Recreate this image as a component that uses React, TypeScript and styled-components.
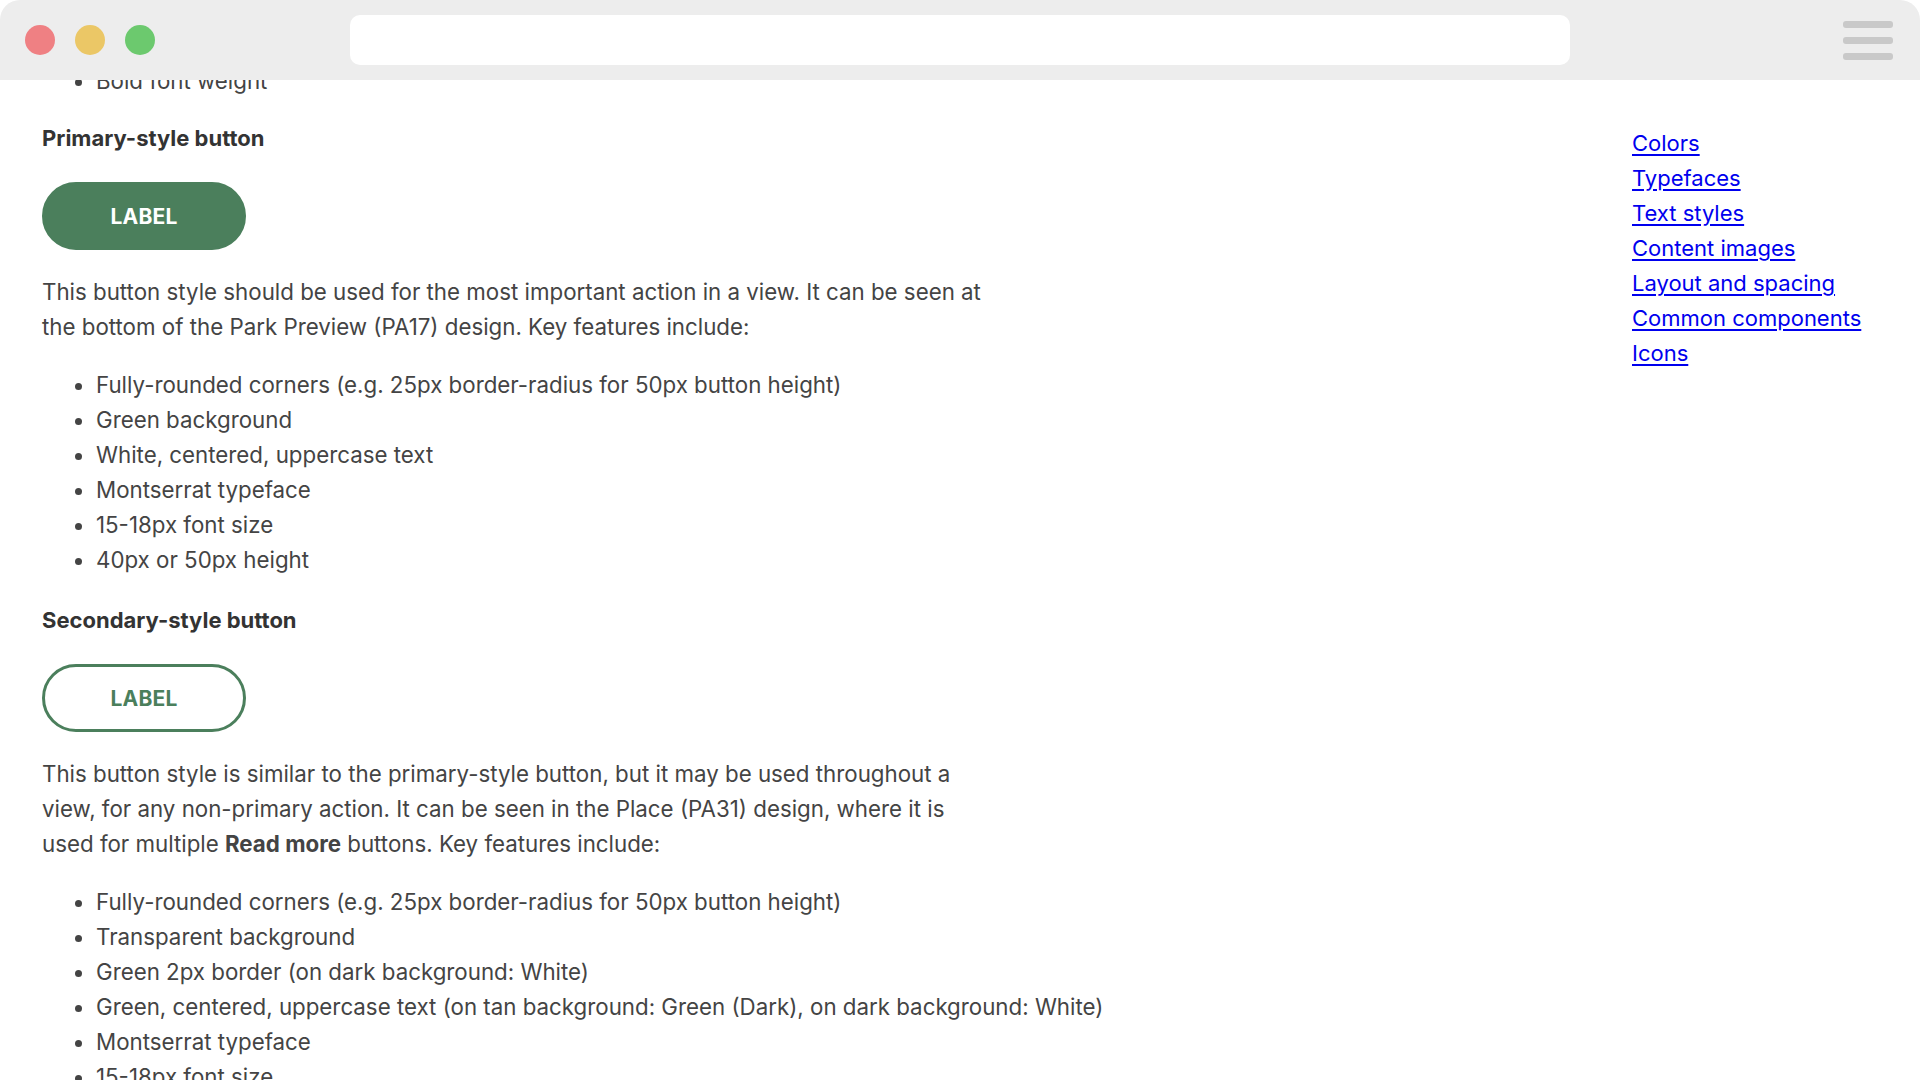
import React from 'react';
import styled, { createGlobalStyle } from 'styled-components';

const GlobalStyle = createGlobalStyle`
  html, body {
    margin: 0;
    padding: 0;
    background: #fff;
    overflow: hidden;
  }
  body {
    font-family: Inter, "Liberation Sans", Arial, sans-serif;
  }
`;

const green = '#4b7f5c';

const Window = styled.div`
  display: flex;
  flex-direction: column;
  height: 100vh;
  background: #fff;
`;

const TitleBar = styled.header`
  display: grid;
  grid-template-columns: 350px 1220px 1fr;
  align-items: center;
  height: 80px;
  flex-shrink: 0;
  background: #ededed;
  border-radius: 20px 20px 0 0;
  position: relative;
  z-index: 1;
`;

const Lights = styled.div`
  display: flex;
  gap: 20px;
  padding-left: 25px;
`;

const Light = styled.span<{ color: string }>`
  width: 30px;
  height: 30px;
  border-radius: 50%;
  background: ${({ color }) => color};
`;

const AddressBar = styled.div`
  height: 50px;
  background: #fff;
  border-radius: 10px;
`;

const Menu = styled.div`
  justify-self: end;
  margin-right: 27px;
  display: flex;
  flex-direction: column;
  gap: 9px;
`;

const MenuBar = styled.span`
  display: block;
  width: 50px;
  height: 7px;
  border-radius: 3px;
  background: #c9c9c9;
`;

const Viewport = styled.div`
  flex: 1;
  overflow: hidden;
  display: grid;
  grid-template-columns: 1fr 288px;
  font-size: 22px;
  line-height: 35px;
`;

const Main = styled.main`
  display: flex;
  flex-direction: column;
  align-items: flex-start;
  padding-left: 42px;
  margin-top: -17px;
  font-size: 22.3px;
  color: #444;
`;

const Heading = styled.h3<{ $first?: boolean }>`
  margin: ${({ $first }) => ($first ? '23px 0 26px' : '26px 0')};
  font-size: 22px;
  line-height: 35px;
  font-weight: 700;
  color: #333;
`;

const Button = styled.button<{ $outline?: boolean }>`
  width: 204px;
  height: 68px;
  margin-bottom: 24px;
  border-radius: 34px;
  border: 3px solid ${green};
  background: ${({ $outline }) => ($outline ? 'transparent' : green)};
  color: ${({ $outline }) => ($outline ? green : '#fff')};
  font-family: inherit;
  font-size: 21px;
  font-weight: 700;
  letter-spacing: 0.2px;
  text-transform: uppercase;
  cursor: pointer;
`;

const Para = styled.p`
  margin: 0 0 23px;
  white-space: nowrap;
`;

const List = styled.ul`
  margin: 0;
  padding-left: 54px;
  list-style: disc;
`;

const Item = styled.li`
  white-space: nowrap;
`;

const Aside = styled.nav`
  display: flex;
  flex-direction: column;
  align-items: flex-start;
  padding-top: 46px;
`;

const Link = styled.a`
  color: #0000ee;
  text-decoration: underline;
  text-underline-offset: 3px;
  white-space: nowrap;
`;

const primaryFeatures = [
  'Fully-rounded corners (e.g. 25px border-radius for 50px button height)',
  'Green background',
  'White, centered, uppercase text',
  'Montserrat typeface',
  '15-18px font size',
  '40px or 50px height',
];

const secondaryFeatures = [
  'Fully-rounded corners (e.g. 25px border-radius for 50px button height)',
  'Transparent background',
  'Green 2px border (on dark background: White)',
  'Green, centered, uppercase text (on tan background: Green (Dark), on dark background: White)',
  'Montserrat typeface',
  '15-18px font size',
  '40px or 50px height',
];

const links = [
  'Colors',
  'Typefaces',
  'Text styles',
  'Content images',
  'Layout and spacing',
  'Common components',
  'Icons',
];

export default function App() {
  return (
    <>
      <GlobalStyle />
      <Window>
        <TitleBar>
          <Lights>
            <Light color="#ef8083" />
            <Light color="#ebc766" />
            <Light color="#6cc96e" />
          </Lights>
          <AddressBar />
          <Menu>
            <MenuBar />
            <MenuBar />
            <MenuBar />
          </Menu>
        </TitleBar>
        <Viewport>
          <Main>
            <List>
              <Item>Bold font weight</Item>
            </List>

            <Heading $first>Primary-style button</Heading>
            <Button>Label</Button>
            <Para>
              This button style should be used for the most important action in a view. It can be seen at
              <br />
              the bottom of the Park Preview (PA17) design. Key features include:
            </Para>
            <List>
              {primaryFeatures.map((f) => (
                <Item key={f}>{f}</Item>
              ))}
            </List>

            <Heading>Secondary-style button</Heading>
            <Button $outline>Label</Button>
            <Para>
              This button style is similar to the primary-style button, but it may be used throughout a
              <br />
              view, for any non-primary action. It can be seen in the Place (PA31) design, where it is
              <br />
              used for multiple <strong>Read more</strong> buttons. Key features include:
            </Para>
            <List>
              {secondaryFeatures.map((f, i) => (
                <Item key={i}>{f}</Item>
              ))}
            </List>
          </Main>
          <Aside>
            {links.map((l) => (
              <Link key={l} href="#">
                {l}
              </Link>
            ))}
          </Aside>
        </Viewport>
      </Window>
    </>
  );
}
